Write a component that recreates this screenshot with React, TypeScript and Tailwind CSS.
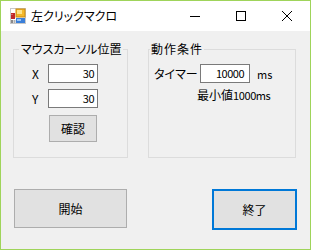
import React from "react";

const F = "[font-family:'Noto_Sans_CJK_JP','Noto_Sans',sans-serif] [font-feature-settings:'palt']";

function AppIcon() {
  return (
    <svg width="16" height="16" viewBox="0 0 16 16">
      <rect x="0.5" y="0.5" width="15" height="15" fill="#ffffff" stroke="#c8c8c8" />
      <rect x="1" y="5" width="4" height="6" fill="#c0282a" />
      <rect x="1.5" y="6" width="1" height="1" fill="#f0a0a0" />
      <rect x="6" y="1" width="9" height="8" fill="#f5b82a" stroke="#c98a10" strokeWidth="1" />
      <rect x="7" y="2" width="5" height="4" fill="#fde38a" />
      <rect x="6" y="10" width="9" height="5" fill="#3b7fd9" />
      <rect x="7" y="11" width="4" height="2" fill="#9cc4f2" />
      <rect x="1" y="12" width="2" height="3" fill="#8a8a8a" />
      <rect x="3.5" y="12" width="2" height="3" fill="#b0b0b0" />
    </svg>
  );
}

export default function App() {
  return (
    <div className={`w-[311px] h-[250px] border border-[#9fd45a] bg-[#f0f0f0] flex flex-col text-black ${F}`}>
      {/* title bar */}
      <div className="h-[30px] bg-white flex items-center shrink-0">
        <div className="ml-[9px] w-[16px] h-[16px] flex"><AppIcon /></div>
        <div className="ml-[5px] text-[12px] leading-[16px]">左クリックマクロ</div>
        <div className="flex-1" />
        <div className="w-[46px] h-[30px] flex items-center justify-center">
          <svg width="10" height="10" viewBox="0 0 10 10"><line x1="0" y1="5.5" x2="10" y2="5.5" stroke="#000" strokeWidth="1" /></svg>
        </div>
        <div className="w-[46px] h-[30px] flex items-center justify-center">
          <svg width="10" height="10" viewBox="0 0 10 10"><rect x="0.5" y="0.5" width="9" height="9" fill="none" stroke="#000" strokeWidth="1" /></svg>
        </div>
        <div className="w-[46px] h-[30px] flex items-center justify-center">
          <svg width="10" height="10" viewBox="0 0 10 10"><path d="M0 0 L10 10 M10 0 L0 10" stroke="#000" strokeWidth="1" /></svg>
        </div>
      </div>

      {/* client */}
      <div className="flex-1 flex flex-col">
        <div className="mt-[18px] pl-[12px] flex gap-[20px]">
          {/* group 1 */}
          <div className="relative w-[115px] h-[109px] border border-[#dcdcdc]">
            <div className="absolute -top-[9px] left-[5px] px-[2px] bg-[#f0f0f0] text-[12px] leading-[16px]">マウスカーソル位置</div>
            <div className="pt-[14px] pl-[18px] flex flex-col">
              <div className="flex items-center">
                <div className="w-[16px] text-[12px] leading-[16px]">X</div>
                <div className="w-[50px] h-[19px] border border-[#7a7a7a] bg-white text-right pr-[3px] text-[11px] leading-[17px] tracking-[-0.5px]">30</div>
              </div>
              <div className="flex items-center mt-[6px]">
                <div className="w-[16px] text-[12px] leading-[16px]">Y</div>
                <div className="w-[50px] h-[19px] border border-[#7a7a7a] bg-white text-right pr-[3px] text-[11px] leading-[17px] tracking-[-0.5px]">30</div>
              </div>
              <div className="mt-[7px] ml-[17px] w-[48px] h-[27px] border border-[#adadad] bg-[#e1e1e1] flex items-center justify-center text-[12px] leading-[16px]">確認</div>
            </div>
          </div>

          {/* group 2 */}
          <div className="relative w-[148px] h-[109px] border border-[#dcdcdc]">
            <div className="absolute -top-[9px] left-[1px] px-[1px] bg-[#f0f0f0] text-[12px] leading-[16px] tracking-[1px]">動作条件</div>
            <div className="pt-[14px] pl-[5px] flex flex-col">
              <div className="flex items-center">
                <div className="w-[46px] text-[12px] leading-[16px]">タイマー</div>
                <div className="w-[50px] h-[19px] border border-[#7a7a7a] bg-white text-right pr-[5px] text-[11px] leading-[17px] tracking-[-0.5px]">10000</div>
                <div className="ml-[7px] text-[11px] leading-[16px]">ms</div>
              </div>
              <div className="mt-[4px] ml-[43px] text-[12px] leading-[16px] whitespace-nowrap">
                最小値<span className="text-[11px] tracking-[-0.4px]">1000ms</span>
              </div>
            </div>
          </div>
        </div>

        <div className="mt-[31px] pl-[13px] flex items-start gap-[85px]">
          <div className="w-[113px] h-[39px] border border-[#adadad] bg-[#e1e1e1] flex items-center justify-center text-[12px] leading-[16px]">開始</div>
          <div className="w-[85px] h-[41px] border-2 border-[#0078d7] bg-[#e1e1e1] flex items-center justify-center text-[12px] leading-[16px]">終了</div>
        </div>
      </div>
    </div>
  );
}
